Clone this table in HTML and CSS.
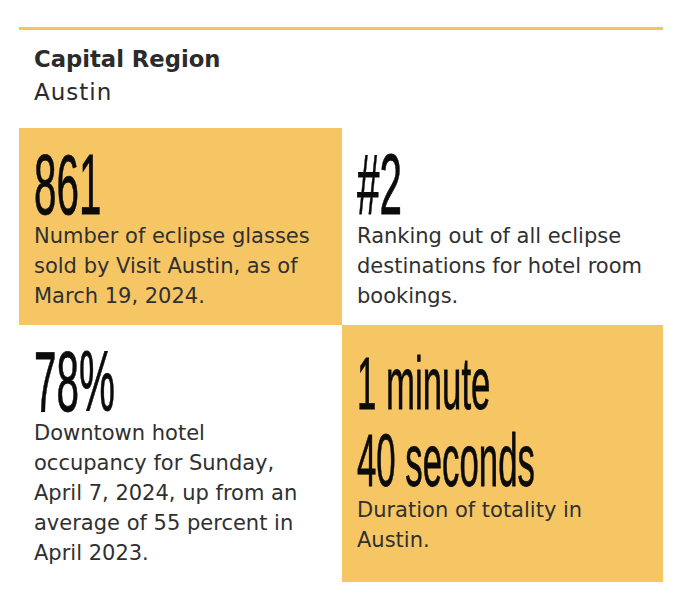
FILE: index.html
```html
<!DOCTYPE html>
<html lang="en">
<head>
<meta charset="utf-8">
<title>Capital Region – Austin</title>
<link rel="stylesheet" href="styles.css">
</head>
<body>
<section class="panel">
  <header class="region">
    <div class="region-name">Capital Region</div>
    <div class="region-city">Austin</div>
  </header>
  <div class="stats">
    <div class="stat stat--accent">
      <div class="stat-value"><span class="squeeze">861</span></div>
      <p class="stat-desc">Number of eclipse glasses sold by Visit Austin, as of March 19, 2024.</p>
    </div>
    <div class="stat">
      <div class="stat-value"><span class="squeeze">#2</span></div>
      <p class="stat-desc">Ranking out of all eclipse destinations for hotel room bookings.</p>
    </div>
    <div class="stat">
      <div class="stat-value"><span class="squeeze">78%</span></div>
      <p class="stat-desc">Downtown hotel occupancy for Sunday, April 7, 2024, up from an average of 55 percent in April 2023.</p>
    </div>
    <div class="stat stat--accent stat--long">
      <div class="stat-value stat-value--small">
        <span class="squeeze">1 minute</span>
        <span class="squeeze">40 seconds</span>
      </div>
      <p class="stat-desc stat-desc--after-long">Duration of totality in Austin.</p>
    </div>
  </div>
</section>
</body>
</html>
```

FILE: styles.css
```css
body {
  margin: 0;
  background: #ffffff;
}

.panel {
  width: 644px;
  margin: 27px 0 0 19px;
  border-top: 3px solid #f5c462;
}

.region {
  padding: 13px 15px 19px;
  color: #2b2b2b;
  font-family: "DejaVu Sans", "Liberation Sans", sans-serif;
}

.region-name {
  font-size: 22.7px;
  font-weight: 700;
  line-height: 33px;
}

.region-city {
  font-size: 23px;
  letter-spacing: 1px;
  line-height: 33px;
}

.stats {
  display: grid;
  grid-template-columns: 323px 321px;
  grid-template-rows: 197px 257px;
}

.stat {
  padding: 19px 0 0 15px;
}

.stat--accent {
  background: #f6c665;
}

.stat--long {
  padding-top: 28px;
}

.stat-value {
  font-family: "Liberation Sans", Arial, sans-serif;
  font-weight: 400;
  font-size: 86px;
  line-height: 74px;
  color: #0b0b0b;
  white-space: nowrap;
  -webkit-text-stroke: 0.8px #0b0b0b;
}

.stat-value--small {
  display: flex;
  flex-direction: column;
  align-items: flex-start;
  gap: 16px;
  font-size: 74px;
  line-height: 61px;
}

.squeeze {
  display: inline-block;
  transform: scaleX(0.47);
  transform-origin: 0 0;
}

.stat-desc {
  margin: 0;
  max-width: 288px;
  font-family: "DejaVu Sans", "Liberation Sans", sans-serif;
  font-size: 21px;
  line-height: 30px;
  color: #303030;
}

.stat-desc--after-long {
  margin-top: 4px;
}
```
